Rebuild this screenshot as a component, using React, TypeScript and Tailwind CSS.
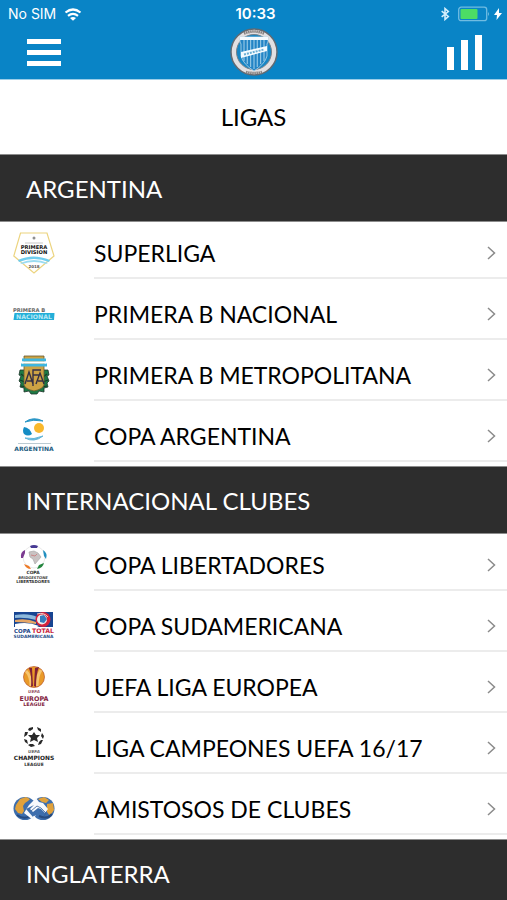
import type { ReactNode } from "react";

const logoClass = "h-[42px] w-[42px] overflow-visible font-['DejaVu_Sans',sans-serif] font-bold";

function SuperligaLogo() {
  return (
    <svg viewBox="0 0 42 42" className={logoClass} aria-hidden="true">
      <path d="M7.500 1H34L41 24L21 41L.8 24Z" fill="#fff" stroke="#ecd47f" strokeWidth="1.200" />
      <path d="M5 28Q20 21 37 28L36 30Q21 24 6 30Z" fill="#6fcdee" />
      <path d="M7 31Q21 25 35 31L33 32Q21 28 9 32Z" fill="#9bdcf2" />
      <circle cx="21" cy="6" r="1.500" fill="#8f8f8f" />
      <path d="M12 11H30" stroke="#b9b9b9" strokeWidth=".8" />
      <text x="21" y="16.800" textAnchor="middle" fontSize="5.200" fill="#111">PRIMERA</text>
      <text x="21" y="22" textAnchor="middle" fontSize="5.200" fill="#111">DIVISION</text>
      <text x="21" y="35.500" textAnchor="middle" fontSize="4" fill="#555">2018</text>
    </svg>
  );
}

function NacionalLogo() {
  return (
    <svg viewBox="0 0 42 42" className={logoClass} aria-hidden="true">
      <text x="0" y="18.800" fontSize="5.200" fill="#666">PRIMERA B</text>
      <path d="M1.500 20H41.500L41 27H.5Z" fill="#24aed8" />
      <text x="21" y="25.700" textAnchor="middle" fontSize="6.200" fill="#b5e8f6">NACIONAL</text>
    </svg>
  );
}

function AfaLogo() {
  return (
    <svg viewBox="0 0 42 42" className={logoClass} aria-hidden="true">
      <path d="M12 16H7L6 21L8 22L6 27L8 29L7 33L11 34L11 38L16 37L18 40H24L26 37L31 38L31 34L35 33L34 29L36 27L34 22L36 21L35 16H30Z" fill="#1c7a45" stroke="#20352b" strokeWidth=".8" />
      <path d="M8 20L12 23M7 26L12 28M8 32L14 33M34 20L30 23M35 26L30 28M34 32L28 33" stroke="#163b29" strokeWidth="1.200" />
      <path d="M11 2H31V31Q30 35 21 37Q12 35 11 31Z" fill="#cda344" stroke="#67592e" strokeWidth=".8" />
      <path d="M9 4.500H33V7.500H9ZM8 9.500H34V12.500H8Z" fill="#3fb6df" />
      <path d="M9 7.500H33V9.500H9Z" fill="#fff" />
      <path d="M12 30L16 18L20 30M14 27H19M20 32V16H28M20 21H26M23 30L27 19L31 30M25 27H30" fill="none" stroke="#343044" strokeWidth="1.400" />
    </svg>
  );
}

function CopaArgentinaLogo() {
  return (
    <svg viewBox="0 0 42 42" className={logoClass} aria-hidden="true">
      <path d="M12 7Q20 1 30 6Q20 4 12 7Z" fill="#2a96c6" stroke="#2a96c6" />
      <path d="M12 23Q21 28 30 21Q21 25 12 23Z" fill="#62b6d9" stroke="#62b6d9" />
      <path d="M11 12Q17 13 19 19Q15 22 11 19Q9 16 11 12Z" fill="#148cc4" />
      <circle cx="26" cy="13" r="5" fill="#f9b82c" />
      <path d="M5 28.500H38" stroke="#a9bdc5" strokeWidth=".8" />
      <text x="21" y="35.500" textAnchor="middle" fontSize="6" fill="#235c80">ARGENTINA</text>
    </svg>
  );
}

function LibertadoresLogo() {
  return (
    <svg viewBox="0 0 42 42" className={logoClass} aria-hidden="true">
      <circle cx="21" cy="13" r="11" fill="none" stroke="#e3e3e3" strokeWidth=".8" />
      <path d="M17 2Q21 0 25 2L24 4H18Z" fill="#473a94" />
      <path d="M8 14Q7 8 12 6L12 9L10 14Z" fill="#7c3b91" />
      <path d="M30 6Q35 9 33 15L31 12Z" fill="#218fc0" />
      <path d="M11 20L16 22L18 25Q13 25 11 20Z" fill="#ed7b28" />
      <path d="M31 19L26 21L24 25Q30 24 31 19Z" fill="#23863e" />
      <path d="M16 8L21 7L25 9L28 13L22 20L20 15L17 13Z" fill="#c9c3c3" stroke="#aaa" strokeWidth=".7" />
      <path d="M18 11L22 12L24 10" fill="none" stroke="#ca7777" strokeWidth=".8" />
      <text x="20" y="30" textAnchor="middle" fontSize="4.400" fill="#333">COPA</text>
      <text x="20" y="34.500" textAnchor="middle" fontSize="3.700" fontStyle="italic" fill="#444">BRIDGESTONE</text>
      <text x="20" y="39" textAnchor="middle" fontSize="4" fill="#333">LIBERTADORES</text>
    </svg>
  );
}

function SudamericanaLogo() {
  return (
    <svg viewBox="0 0 42 42" className={logoClass} aria-hidden="true">
      <path d="M1 7H40V22H1Z" fill="#174592" />
      <path d="M2 10Q16 8 24 12L23 15Q12 12 2 13Z" fill="#8db9dc" />
      <path d="M2 15Q14 13 23 17V19Q12 17 2 17Z" fill="#e6a665" />
      <path d="M2 19Q15 16 26 21L24 22H2Z" fill="#fff" />
      <circle cx="30" cy="14.500" r="7.500" fill="#d6233c" />
      <circle cx="29" cy="14.500" r="5" fill="#eee" />
      <path d="M27 11L31 10L34 14L31 18L27 17Z" fill="#367cbd" />
      <path d="M24 9Q31 7 35 12" fill="none" stroke="#f0d2c7" />
      <text x="1" y="28" fontSize="5.500" fill="#184385">COPA</text>
      <text x="19" y="28" fontSize="6.200" fill="#c8283f">TOTAL</text>
      <text x="20.500" y="33" textAnchor="middle" fontSize="4.400" fill="#284e8b">SUDAMERICANA</text>
    </svg>
  );
}

function EuropaLogo() {
  return (
    <svg viewBox="0 0 42 42" className={logoClass} aria-hidden="true">
      <circle cx="21" cy="11" r="10.500" fill="#e99a28" stroke="#b75429" strokeWidth=".7" />
      <path d="M13 5Q18 10 18 20M28 4Q24 10 24 20" fill="none" stroke="#f6c570" strokeWidth="3" />
      <path d="M16 2L19 2L20 20L18 21Q19 10 16 2ZM22 2L26 1Q23 8 23 21L21 20Z" fill="#812136" />
      <text x="21" y="27" textAnchor="middle" fontSize="4.200" fontStyle="italic" fill="#985668">UEFA</text>
      <text x="21" y="34.500" textAnchor="middle" fontSize="6.400" fill="#83253f">EUROPA</text>
      <text x="21" y="40" textAnchor="middle" fontSize="4.900" fill="#83253f">LEAGUE</text>
    </svg>
  );
}

function ChampionsLogo() {
  return (
    <svg viewBox="0 0 42 42" className={logoClass} aria-hidden="true">
      <g fill="#292929">
        <path d="M21 5L23 8L27 8L24 11L25 15L21 13L17 15L18 11L15 8L19 8Z" />
        <path d="M16 1L20 0L20 2L17 4L15 3ZM24 0L28 2L28 5L25 3ZM12 5L15 5L14 8L11 10ZM29 6L31 9L30 12L28 9ZM11 12L14 13L15 17L12 15ZM17 17L20 17L22 19L18 20L15 18ZM28 13L30 13L28 17L25 18L26 15Z" />
      </g>
      <text x="21" y="26" textAnchor="middle" fontSize="4.200" fontStyle="italic" fill="#666">UEFA</text>
      <text x="21" y="33" textAnchor="middle" fontSize="5.900" fill="#222">CHAMPIONS</text>
      <text x="21" y="38.500" textAnchor="middle" fontSize="4.400" fill="#333">LEAGUE</text>
    </svg>
  );
}

function AmistososLogo() {
  return (
    <svg viewBox="0 0 42 42" className={logoClass} aria-hidden="true">
      <circle cx="12" cy="20.500" r="11.500" fill="#3d6ead" />
      <circle cx="30" cy="20.500" r="11.500" fill="#3d6ead" />
      <path d="M3 17L7 11L13 9L17 11L15 13L12 15L10 18L11 23L9 26L5 25L2 21Z" fill="#e0a13b" />
      <path d="M25 11L31 9L36 12L33 15L29 14ZM34 16L40 15L41 22L37 28L34 24Z" fill="#e0a13b" />
      <path d="M4 27Q11 32 17 28M26 28Q34 32 39 26" fill="none" stroke="#264b80" strokeWidth="2" />
      <path d="M16 17L23 10L26 14L30 15L35 21L32 25L28 21L25 20L20 24L17 21L21 17L13 21L20 29L23 27L20 32L11 25Z" fill="#f7f9fc" />
      <path d="M18 23L24 18L28 20L33 25L31 28" fill="none" stroke="#365f98" strokeWidth=".8" />
    </svg>
  );
}

function ClubCrest() {
  return (
    <svg viewBox="0 0 48 48" className="h-12 w-12" role="img" aria-label="Godoy Cruz">
      <circle cx="24" cy="24" r="23" fill="#e2e0e2" stroke="#626a72" strokeWidth="1.500" />
      <circle cx="24" cy="24" r="17.500" fill="#1686c5" stroke="#77818a" />
      <path d="M14 5.500Q24 1.500 34 5.500M16 44Q24 46 32 44" fill="none" stroke="#85807f" strokeWidth="2.600" strokeDasharray="1.500 .6" />
      <path d="M10 9H38V14L37 16V28Q35 36 24 43Q13 36 11 28V16L10 14Z" fill="#2384c5" stroke="#b7d8ea" strokeWidth=".8" />
      <path d="M14 12V33M17.300 12V36M20.600 12V39M24 12V41M27.300 12V39M30.600 12V36M34 12V33" stroke="#8fc5e4" strokeWidth="1.200" />
      <path d="M10 9H38V12H10Z" fill="#f4fbff" />
      <path d="M11 24L37 18V23L11 30Z" fill="#f4fbff" />
      <path d="M14 26.500L34 21.500" stroke="#6aaed4" strokeWidth="2" strokeDasharray="2 1" />
    </svg>
  );
}

const sections: { title: string; leagues: { name: string; logo: ReactNode }[] }[] = [
  {
    title: "ARGENTINA",
    leagues: [
      { name: "SUPERLIGA", logo: <SuperligaLogo /> },
      { name: "PRIMERA B NACIONAL", logo: <NacionalLogo /> },
      { name: "PRIMERA B METROPOLITANA", logo: <AfaLogo /> },
      { name: "COPA ARGENTINA", logo: <CopaArgentinaLogo /> },
    ],
  },
  {
    title: "INTERNACIONAL CLUBES",
    leagues: [
      { name: "COPA LIBERTADORES", logo: <LibertadoresLogo /> },
      { name: "COPA SUDAMERICANA", logo: <SudamericanaLogo /> },
      { name: "UEFA LIGA EUROPEA", logo: <EuropaLogo /> },
      { name: "LIGA CAMPEONES UEFA 16/17", logo: <ChampionsLogo /> },
      { name: "AMISTOSOS DE CLUBES", logo: <AmistososLogo /> },
    ],
  },
  { title: "INGLATERRA", leagues: [] },
];

function StatusBar() {
  return (
    <div className="grid h-7 grid-cols-3 items-center pr-1 pl-2 font-[Inter,sans-serif] text-[14px] leading-5">
      <div className="flex items-center gap-2">
        <span>No SIM</span>
        <svg viewBox="0 0 18 13" className="h-[13px] w-[18px]" role="img" aria-label="Wi-Fi">
          <path d="M1.500 4.500Q9-1.500 16.500 4.500M4 7.800Q9 3.800 14 7.800" fill="none" stroke="currentColor" strokeWidth="2.200" />
          <path d="M6 10Q9 7.800 12 10L9 12.800Z" fill="currentColor" />
        </svg>
      </div>
      <time className="text-center text-[15px] font-semibold">10:33</time>
      <div className="flex items-center justify-end gap-1">
        <svg viewBox="0 0 12 16" className="h-[14px] w-[10px]" role="img" aria-label="Bluetooth">
          <path d="M2 4.500L10 11L6 14.500V1.500L10 5L2 11.500" fill="none" stroke="#d5effc" strokeWidth="1.900" />
        </svg>
        <svg viewBox="0 0 32 16" className="ml-1 h-4 w-8" role="img" aria-label="Battery">
          <rect x=".7" y="1.200" width="28" height="13.500" rx="2.500" fill="none" stroke="#70bce2" strokeWidth="1.300" />
          <rect x="2.500" y="3" width="17" height="10" rx="1" fill="#4cdc65" />
          <path d="M30 6Q32 8 30 10Z" fill="#70bce2" />
        </svg>
        <svg viewBox="0 0 8 12" className="mr-px h-3 w-2" aria-hidden="true">
          <path d="M5 0L0 7H3L2.500 12L8 5H5Z" fill="currentColor" />
        </svg>
      </div>
    </div>
  );
}

export default function App() {
  return (
    <div className="flex h-screen flex-col overflow-hidden bg-white font-[Lato,sans-serif] text-black">
      <header className="h-20 shrink-0 border-b border-[#9bcde8] bg-[#0984c6] text-white">
        <StatusBar />
        <div className="grid grid-cols-3 items-center px-6">
          <button type="button" aria-label="Menú" className="justify-self-start p-[2px]">
            <svg viewBox="0 0 36 28" className="h-7 w-9" aria-hidden="true">
              <path d="M1 1H35V6H1ZM1 12H35V17H1ZM1 23H35V28H1Z" fill="currentColor" />
            </svg>
          </button>
          <div className="justify-self-center">
            <ClubCrest />
          </div>
          <button type="button" aria-label="Estadísticas" className="justify-self-end">
            <svg viewBox="0 0 36 36" className="h-9 w-9" aria-hidden="true">
              <path d="M0 13H7V36H0ZM14 6H21V36H14ZM28 1H35V36H28Z" fill="currentColor" />
            </svg>
          </button>
        </div>
      </header>
      <h1 className="flex h-[74px] shrink-0 items-center justify-center text-[24px] leading-8">LIGAS</h1>
      <main className="min-h-0 flex-1 overflow-y-auto [scrollbar-width:none]">
        {sections.map((section) => (
          <section key={section.title}>
            <h2 className="flex h-[68px] items-center border-y border-[#8c8c8c] bg-[#2d2d2d] px-[26px] pt-[2px] text-[24px] leading-8 text-white">
              {section.title}
            </h2>
            <ul>
              {section.leagues.map((league) => (
                <li key={league.name}>
                  <button type="button" className="flex h-[61px] w-full items-center pl-[13px] text-left">
                    <span className="mr-[39px] shrink-0">{league.logo}</span>
                    <span className="mb-1 flex h-[57px] min-w-0 flex-1 items-center justify-between border-b-2 border-[#ececec] pt-[6px] pr-[11px] text-[23px] leading-8">
                      {league.name}
                      <svg viewBox="0 0 9 14" className="h-[14px] w-[9px]" aria-hidden="true">
                        <path d="M1 1L7.500 7L1 13" fill="none" stroke="#8b8b8b" strokeWidth="1.500" />
                      </svg>
                    </span>
                  </button>
                </li>
              ))}
            </ul>
          </section>
        ))}
      </main>
    </div>
  );
}
